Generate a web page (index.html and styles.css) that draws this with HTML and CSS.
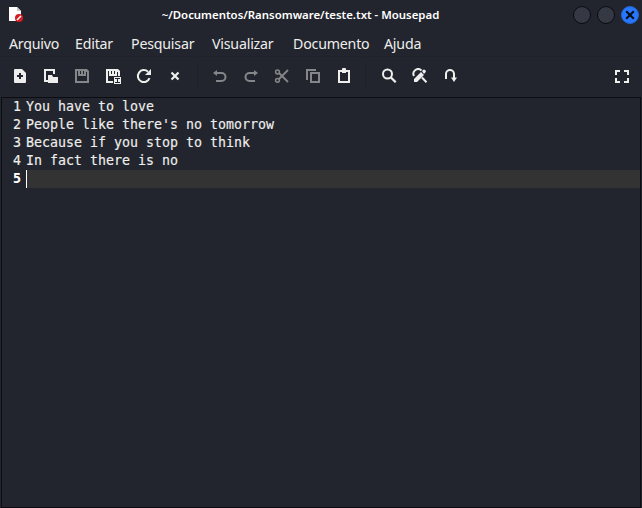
FILE: index.html
```html
<!DOCTYPE html>
<html lang="pt">
<head>
<meta charset="utf-8">
<title>Mousepad</title>
<link rel="stylesheet" href="styles.css">
</head>
<body>
<div class="window">
<header class="titlebar">
<svg class="app-icon" viewBox="0 0 16 16"><path d="M1 0h8l4 4v10H1z" fill="#fff"/><path d="M9 0v4h4z" fill="#ccc"/><circle cx="11" cy="11" r="4" fill="#d51c22"/><path d="m9 13 4-4" stroke="#fff" stroke-width="1.6"/></svg>
<h1>~/Documentos/Ransomware/teste.txt - Mousepad</h1>
<div class="controls"><i></i><i></i><i class="close"><svg viewBox="0 0 10 10"><path d="m1.200 1.200 7.600 7.600m0-7.600L1.200 8.800" stroke="#090e18" stroke-width="2.2"/></svg></i></div>
</header>
<nav class="menu"><span>Arquivo</span><span>Editar</span><span>Pesquisar</span><span>Visualizar</span><span>Documento</span><span>Ajuda</span></nav>
<div class="toolbar">
<b><svg viewBox="0 0 16 16"><path fill="currentColor" fill-rule="evenodd" d="M3 1h7l4 4v9q0 1-1 1H3q-1 0-1-1V2q0-1 1-1zm4 4v2H5v2h2v2h2V9h2V7H9V5z"/></svg></b>
<b><svg viewBox="0 0 16 16"><path fill="currentColor" d="M1 1h11v5h-2V3H3v9h2v2H1zM5 7h4l1 2h5v6H5z"/></svg></b>
<b class="off"><svg viewBox="0 0 16 16"><path fill="currentColor" fill-rule="evenodd" d="M1 1h12l2 2v12H1zm2 2v10h10V4h-1v4H4V3zm3 0v3h1V3zm3 0v3h1V3z"/></svg></b>
<b><svg viewBox="0 0 16 16"><path fill="currentColor" fill-rule="evenodd" d="M1 1h12l2 2v5h-2V4h-1v4H4V3H3v10h5v2H1zm5 2v3h1V3zm3 0v3h1V3zM9 9h7v7H9zm1 1v1h2v3h-2v1h5v-1h-2v-3h2v-1z"/></svg></b>
<b><svg viewBox="0 0 16 16"><path d="M13.500 10.200A6 6 0 1 1 12 3.700" fill="none" stroke="currentColor" stroke-width="2"/><path d="M15 1v6H9z" fill="currentColor"/></svg></b>
<b><svg viewBox="0 0 16 16"><path d="m4.500 4.500 7 7m0-7-7 7" stroke="currentColor" stroke-width="2.200"/></svg></b>
<hr>
<b class="off"><svg viewBox="0 0 16 16"><path d="M5 5h4.500a4 4 0 0 1 0 8H4" fill="none" stroke="currentColor" stroke-width="2"/><path d="M1 5l4-3v6z" fill="currentColor"/></svg></b>
<b class="off"><svg viewBox="0 0 16 16"><path d="M11 5H6.500a4 4 0 0 0 0 8H12" fill="none" stroke="currentColor" stroke-width="2"/><path d="m15 5-4-3v6z" fill="currentColor"/></svg></b>
<b class="off"><svg viewBox="0 0 16 16"><path d="m5 5 9 9M5 11l9-9" stroke="currentColor" stroke-width="1.800"/><g fill="none" stroke="currentColor" stroke-width="1.500"><circle cx="3.500" cy="4" r="1.900"/><circle cx="3.500" cy="12.300" r="1.900"/></g></svg></b>
<b class="off"><svg viewBox="0 0 16 16"><path d="M2 12V2h9M6 5h8v9H6z" fill="none" stroke="currentColor" stroke-width="2"/></svg></b>
<b><svg viewBox="0 0 16 16"><path fill="currentColor" fill-rule="evenodd" d="M2 2h4V1q0-1 1-1h2q1 0 1 1v1h4v13H2zm2 2v9h8V4h-2v1H6V4z"/></svg></b>
<hr class="second">
<b><svg viewBox="0 0 16 16"><circle cx="6.500" cy="6" r="4.500" fill="none" stroke="currentColor" stroke-width="2"/><path d="m9.700 9.300 5 5" stroke="currentColor" stroke-width="2.300"/></svg></b>
<b><svg viewBox="0 0 16 16"><path d="M2 8a4.700 4.700 0 0 1 7.500-5.500M10 9.500l4.500 4.700" fill="none" stroke="currentColor" stroke-width="2"/><path d="m2 11 7-7 3 3-7 7H2zm8-8 1-1q1-1 2 0l1 1q0 1-2 3z" fill="currentColor"/></svg></b>
<b><svg viewBox="0 0 16 16"><path d="M3 11V6a4 4 0 0 1 8 0v5" fill="none" stroke="currentColor" stroke-width="2"/><path d="M8 9.500h6L11 14z" fill="currentColor"/></svg></b>
<b class="full"><svg viewBox="0 0 16 16"><path d="M2 7V3h4m4 0h4v4m0 3v4h-4m-4 0H2v-4" fill="none" stroke="currentColor" stroke-width="2"/></svg></b>
</div>
<main class="editor">
<div class="line"><span class="num">1</span><span class="text">You have to love</span></div>
<div class="line"><span class="num">2</span><span class="text">People like there's no tomorrow</span></div>
<div class="line"><span class="num">3</span><span class="text">Because if you stop to think</span></div>
<div class="line"><span class="num">4</span><span class="text">In fact there is no</span></div>
<div class="line current"><span class="num">5</span><span class="text"></span></div>
</main>
</div>
</body>
</html>
```
FILE: styles.css
```css
* { box-sizing: border-box; }
body { margin: 0; background: #23252e; color: #eeeeec; font-family: "Noto Sans", sans-serif; }
.window { width: 642px; height: 508px; display: flex; flex-direction: column; overflow: hidden; }
.titlebar { height: 30px; display: grid; grid-template-columns: 80px 1fr 80px; align-items: center; }
.app-icon { width: 16px; height: 16px; margin-left: 8px; }
h1 { margin: 0; font-size: 11.4px; line-height: 30px; font-weight: 600; text-align: center; white-space: nowrap; padding-right: 41px; color: #fff; }
.controls { display: flex; gap: 6px; padding-left: 11px; }
.controls i { flex: none; width: 18px; height: 18px; border-radius: 50%; background: #353944; border: 1px solid #090b10; display: grid; place-items: center; }
.controls .close { background: #2777ff; border-color: #2364d0; }
.close svg { width: 10px; height: 10px; }
.menu { height: 27px; display: grid; grid-template-columns: 66px 56px 81px 81px 91px 1fr; padding-left: 9px; font-size: 14.2px; letter-spacing: -0.2px; line-height: 27px; border-bottom: 1px solid #20222a; white-space: nowrap; }
.toolbar { height: 40px; display: flex; align-items: center; padding: 0 5px 2px 4px; }
.toolbar b { width: 31px; height: 31px; flex: none; display: grid; place-items: center; }
.toolbar svg { width: 16px; height: 16px; display: block; }
.toolbar .off { color: #85868a; }
.toolbar hr { width: 1px; height: 30px; margin: 0 6px 0 7px; border: 0; background: #1f2129; }
.toolbar .second { margin: 0 7px 0 6px; }
.toolbar .full { margin-left: auto; }
.editor { flex: 1; border: 1px solid #0b0d12; margin: 0 1px; font: 13.29px/18px "DejaVu Sans Mono", monospace; -webkit-text-stroke: 0.15px currentColor; }
.line { height: 18px; display: flex; white-space: pre; }
.num { width: 24px; padding-left: 11px; }
.text { flex: 1; }
.current .num { font-weight: 700; color: #fff; }
.current .text { background: #333333; border-left: 1px solid #fff; }
```
